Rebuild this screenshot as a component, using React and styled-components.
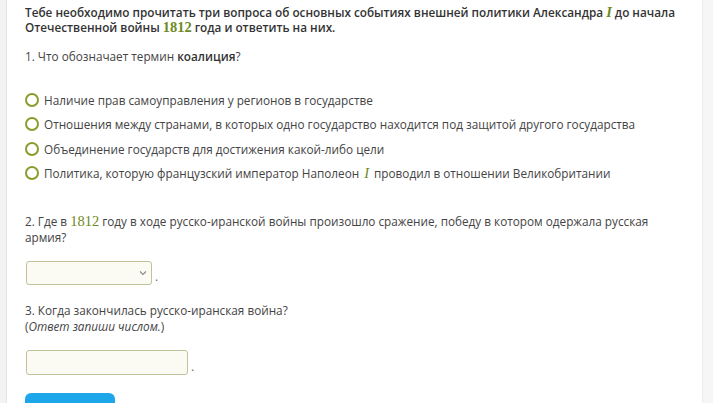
import React from "react";
import styled, { createGlobalStyle } from "styled-components";

const Global = createGlobalStyle`
  html, body { margin: 0; padding: 0; background: #fff; }
  body { font-family: "Open Sans", "Liberation Sans", sans-serif; color: #333; }
`;

const Page = styled.div`
  display: flex;
  min-height: 403px;
`;

const LeftRail = styled.div`
  width: 6px;
  background: #f3f3f3;
  border-right: 1px solid #e6e6e6;
  flex: none;
`;

const RightRail = styled.div`
  width: 10px;
  background: #f6f6f6;
  border-left: 1px solid #ececec;
  flex: none;
`;

const Main = styled.main`
  flex: 1;
  padding: 5px 12px 0 18px;
  display: flex;
  flex-direction: column;
`;

const Intro = styled.p`
  margin: 0;
  font-size: 11.75px;
  font-weight: 600;
  line-height: 15px;
  color: #333;
`;

const Question = styled.p`
  margin: ${(p) => p.$top || 0}px 0 0;
  font-size: 11.75px;
  line-height: 16px;
  color: #444;
`;

const Strong = styled.b`
  font-weight: 600;
  color: #333;
`;

const Num = styled.span`
  font-family: "Liberation Serif", "DejaVu Serif", serif;
  font-size: 14.5px;
  color: #6f8a1e;
`;

const Roman = styled.i`
  font-family: "Liberation Serif", "DejaVu Serif", serif;
  font-size: 14.5px;
  color: #6f8a1e;
`;

const Options = styled.div`
  display: flex;
  flex-direction: column;
  gap: 8.3px;
  margin-top: 28px;
`;

const Option = styled.label`
  display: flex;
  align-items: center;
  gap: 5px;
  font-size: 11.75px;
  line-height: 16px;
  color: #444;
`;

const Radio = styled.span`
  width: 10px;
  height: 10px;
  border: 2px solid #8b9c2c;
  border-radius: 50%;
  flex: none;
`;

const FieldRow = styled.div`
  display: flex;
  align-items: flex-end;
  gap: 3px;
  margin-top: ${(p) => p.$top}px;
  padding-left: 1px;
  font-size: 12px;
  color: #666;
`;

const Select = styled.div`
  width: 120px;
  height: 22px;
  border: 1px solid #c0c39a;
  border-radius: 3px;
  background: #fbfbf3;
  display: flex;
  align-items: center;
  justify-content: flex-end;
  padding-right: 4px;
  box-sizing: content-box;
`;

const Input = styled.div`
  width: 160px;
  height: 23px;
  border: 1px solid #c0c39a;
  border-radius: 3px;
  background: #fbfbf3;
`;

const Button = styled.div`
  margin-top: 18px;
  width: 90px;
  height: 24px;
  border-radius: 6px 6px 0 0;
  background: #1ea6ea;
`;

export default function App() {
  return (
    <>
      <Global />
      <Page>
        <LeftRail />
        <Main>
          <Intro>
            Тебе необходимо прочитать три вопроса об основных событиях внешней политики Александра <Roman>I</Roman> до начала
            Отечественной войны <Num>1812</Num> года и ответить на них.
          </Intro>
          <Question $top={13}>
            1. Что обозначает термин <Strong>коалиция</Strong>?
          </Question>
          <Options>
            <Option><Radio />Наличие прав самоуправления у регионов в государстве</Option>
            <Option><Radio />Отношения между странами, в которых одно государство находится под защитой другого государства</Option>
            <Option><Radio />Объединение государств для достижения какой-либо цели</Option>
            <Option><Radio />Политика, которую французский император Наполеон <Roman>I</Roman> проводил в отношении Великобритании</Option>
          </Options>
          <Question $top={32}>
            2. Где в <Num>1812</Num> году в ходе русско-иранской войны произошло сражение, победу в котором одержала русская армия?
          </Question>
          <FieldRow $top={16}>
            <Select>
              <svg width="8" height="6" viewBox="0 0 8 6">
                <path d="M1 1.5 L4 4.5 L7 1.5" fill="none" stroke="#888" strokeWidth="1.1" />
              </svg>
            </Select>
            <span>.</span>
          </FieldRow>
          <Question $top={17}>
            3. Когда закончилась русско-иранская война?
            <br />
            (<i>Ответ запиши числом.</i>)
          </Question>
          <FieldRow $top={16}>
            <Input />
            <span>.</span>
          </FieldRow>
          <Button />
        </Main>
        <RightRail />
      </Page>
    </>
  );
}
